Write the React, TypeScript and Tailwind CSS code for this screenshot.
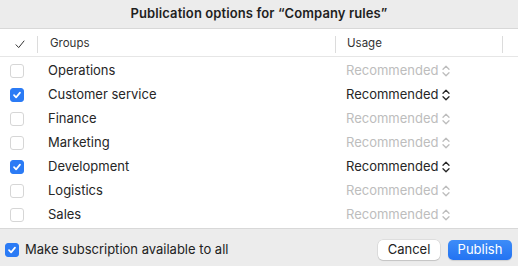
import React, { useState } from 'react';

type Group = { name: string; checked: boolean };

const initialGroups: Group[] = [
  { name: 'Operations', checked: false },
  { name: 'Customer service', checked: true },
  { name: 'Finance', checked: false },
  { name: 'Marketing', checked: false },
  { name: 'Development', checked: true },
  { name: 'Logistics', checked: false },
  { name: 'Sales', checked: false },
];

const Checkbox: React.FC<{ checked: boolean; onClick?: () => void }> = ({ checked, onClick }) => (
  <button
    onClick={onClick}
    className={`w-[14px] h-[14px] rounded-[3px] flex items-center justify-center shrink-0 ${
      checked ? 'bg-[#2b7bf5] border border-[#2b7bf5]' : 'bg-white border border-[#d6d6d6]'
    }`}
  >
    {checked && (
      <svg width="10" height="10" viewBox="0 0 10 10" fill="none">
        <path d="M2 5.2 L4.1 7.4 L8 2.6" stroke="white" strokeWidth="1.7" strokeLinecap="round" strokeLinejoin="round" />
      </svg>
    )}
  </button>
);

const UpDown: React.FC<{ color: string }> = ({ color }) => (
  <svg width="8" height="12" viewBox="0 0 8 12" fill="none" className="ml-[3px]">
    <path d="M1 4.3 L4 1.3 L7 4.3" stroke={color} strokeWidth="1.3" strokeLinecap="round" strokeLinejoin="round" />
    <path d="M1 7.7 L4 10.7 L7 7.7" stroke={color} strokeWidth="1.3" strokeLinecap="round" strokeLinejoin="round" />
  </svg>
);

export default function App() {
  const [groups, setGroups] = useState(initialGroups);
  const [all, setAll] = useState(true);

  const toggle = (i: number) =>
    setGroups(g => g.map((x, j) => (j === i ? { ...x, checked: !x.checked } : x)));

  return (
    <div className="w-[518px] h-[266px] flex flex-col bg-white text-[#262626] font-['Inter','Liberation_Sans',sans-serif] overflow-hidden">
      <div className="h-[29px] shrink-0 bg-[#ececec] border-b border-[#d8d8d8] flex items-center justify-center">
        <h1 className="text-[13px] font-semibold text-[#1f1f1f] tracking-[0.1px]">Publication options for “Company rules”</h1>
      </div>

      <div className="h-[28px] shrink-0 flex items-center border-b border-[#e6e6e6] text-[11.5px] text-[#333] pt-[3px]">
        <div className="w-[37px] flex items-center justify-center pl-[2px]">
          <svg width="10" height="9" viewBox="0 0 10 9" fill="none">
            <path d="M1 4.8 L3.7 7.6 L9 1" stroke="#333" strokeWidth="1" strokeLinecap="round" strokeLinejoin="round" />
          </svg>
        </div>
        <div className="w-px h-[17px] bg-[#dcdcdc]" />
        <div className="w-[297px] pl-[12px]">Groups</div>
        <div className="w-px h-[17px] bg-[#dcdcdc]" />
        <div className="w-[166px] pl-[11px]">Usage</div>
        <div className="w-px h-[17px] bg-[#dcdcdc]" />
      </div>

      <div className="flex-1 flex flex-col pt-[2px]">
        {groups.map((g, i) => (
          <div key={g.name} className="h-[24px] flex items-center">
            <div className="w-[37px] pl-[10px] flex items-center">
              <Checkbox checked={g.checked} onClick={() => toggle(i)} />
            </div>
            <div className="w-[298px] pl-[11px] text-[13px]">{g.name}</div>
            <div
              className={`pl-[11px] flex items-center text-[13px] ${g.checked ? 'text-[#262626]' : 'text-[#bdbdbd]'}`}
            >
              Recommended
              <UpDown color={g.checked ? '#262626' : '#bdbdbd'} />
            </div>
          </div>
        ))}
      </div>

      <div className="h-[38px] shrink-0 bg-[#ececec] border-t border-[#d8d8d8] flex items-center pl-[5px] pr-[6px] pt-[5px]">
        <Checkbox checked={all} onClick={() => setAll(!all)} />
        <span className="ml-[6px] text-[13px] text-[#222]">Make subscription available to all</span>
        <div className="ml-auto flex items-center gap-[8px]">
          <button className="w-[62px] h-[20px] rounded-[5px] bg-white text-[13px] text-[#222] shadow-[0_0_0_0.5px_rgba(0,0,0,0.12),0_1px_1px_rgba(0,0,0,0.12)]">
            Cancel
          </button>
          <button className="w-[64px] h-[20px] rounded-[5px] bg-gradient-to-b from-[#3d8cf8] to-[#2373f2] text-[13px] text-white shadow-[0_1px_1px_rgba(0,0,0,0.12)]">
            Publish
          </button>
        </div>
      </div>
    </div>
  );
}
